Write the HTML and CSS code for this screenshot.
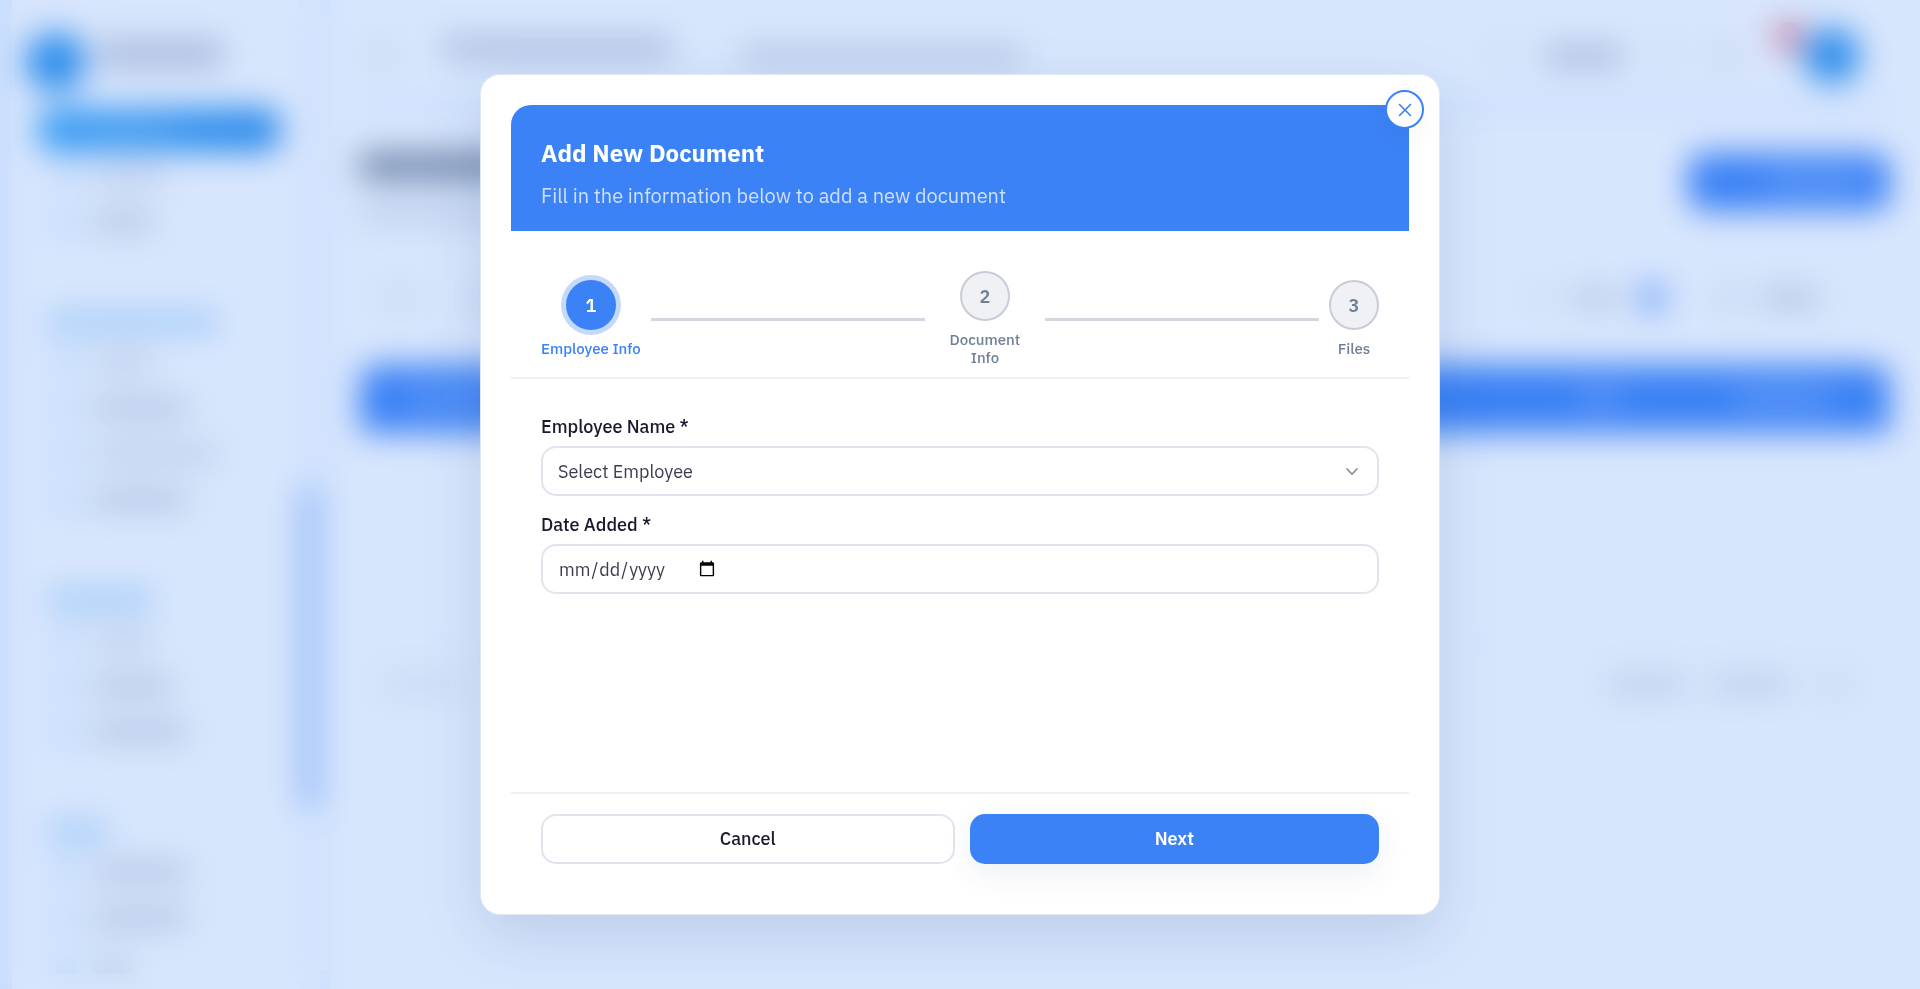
FILE: index.html
```html
<!DOCTYPE html>
<html lang="en">
<head>
    <meta charset="UTF-8">
    <meta name="viewport" content="width=device-width, initial-scale=1.0">
    <title>Documents</title>
    <link rel="stylesheet" href="styles.css">
</head>
<body>
    <!-- Page behind the modal -->
    <div class="app" aria-hidden="true">
        <aside class="sidebar">
            <div class="sidebar-content">
                <div class="brand"><i class="logo"></i><i class="bar bar-dark w-120"></i></div>
                <div class="nav-group">
                    <div class="nav-item active"><i class="icon"></i><i class="bar w-80"></i></div>
                    <div class="nav-item"><i class="icon"></i><i class="bar w-70"></i></div>
                    <div class="nav-item"><i class="icon"></i><i class="bar bar-mid w-60"></i></div>
                </div>
                <div class="nav-group">
                    <div class="nav-title"><i class="w-170"></i></div>
                    <div class="nav-item"><i class="icon"></i><i class="bar w-60"></i></div>
                    <div class="nav-item"><i class="icon"></i><i class="bar bar-mid w-100"></i></div>
                    <div class="nav-item"><i class="icon"></i><i class="bar w-120"></i></div>
                    <div class="nav-item"><i class="icon"></i><i class="bar bar-mid w-100"></i></div>
                </div>
                <div class="nav-group">
                    <div class="nav-title"><i class="w-100"></i></div>
                    <div class="nav-item"><i class="icon"></i><i class="bar w-60"></i></div>
                    <div class="nav-item"><i class="icon"></i><i class="bar bar-mid w-80"></i></div>
                    <div class="nav-item"><i class="icon"></i><i class="bar bar-mid w-100"></i></div>
                </div>
                <div class="nav-group">
                    <div class="nav-title"><i class="w-60"></i></div>
                    <div class="nav-item"><i class="icon"></i><i class="bar bar-mid w-100"></i></div>
                    <div class="nav-item"><i class="icon"></i><i class="bar bar-mid w-100"></i></div>
                    <div class="nav-item"><i class="icon"></i><i class="bar w-40"></i></div>
                </div>
            </div>
            <div class="scrollbar"><i class="thumb"></i></div>
        </aside>
        <main class="main">
            <div class="topbar">
                <i class="bar w-20"></i>
                <div class="topbar-text">
                    <i class="bar bar-dark w-230"></i>
                </div>
                <i class="bar bar-mid w-280"></i>
                <div class="topbar-right">
                    <i class="bar bar-light w-20"></i>
                    <i class="bar bar-dark w-80"></i>
                    <i class="bar bar-light w-20"></i>
                    <i class="bar w-20"></i>
                    <div class="avatar"><i class="badge"></i></div>
                </div>
            </div>
            <div class="page-head">
                <div class="page-title">
                    <i class="bar bar-title w-230"></i>
                    <i class="bar w-280"></i>
                </div>
                <div class="add-btn"><i class="bar bar-white w-100"></i></div>
            </div>
            <div class="card">
                <div class="filters">
                    <i class="bar bar-light w-40"></i>
                    <i class="bar w-40"></i>
                    <div class="filters-right">
                        <i class="bar bar-light w-20"></i>
                        <i class="bar bar-mid w-40"></i>
                        <i class="count"></i>
                        <i class="bar w-20"></i>
                        <i class="bar bar-mid w-60"></i>
                    </div>
                </div>
                <div class="table-head">
                    <i class="bar bar-white w-80"></i>
                    <i class="bar bar-white w-80"></i>
                    <i class="bar bar-white w-80"></i>
                    <i class="bar bar-white w-80"></i>
                    <div class="table-head-right">
                        <i class="bar bar-white w-40"></i>
                        <i class="bar bar-white w-100"></i>
                    </div>
                </div>
                <div class="table-body"></div>
                <div class="pagination">
                    <i class="bar bar-light w-80"></i>
                    <div class="pages">
                        <i class="bar w-80"></i>
                        <i class="bar w-80"></i>
                        <i class="bar bar-light w-40"></i>
                    </div>
                </div>
            </div>
        </main>
    </div>

    <div class="overlay">
        <div class="modal" role="dialog" aria-modal="true" aria-labelledby="modalTitle">
            <button type="button" class="close-btn" aria-label="Close">
                <svg width="14" height="14" viewBox="0 0 14 14" fill="none" stroke="currentColor" stroke-width="1.6" stroke-linecap="round">
                    <path d="M1.5 1.5l11 11M12.5 1.5l-11 11"/>
                </svg>
            </button>
            <div class="modal-header">
                <h2 id="modalTitle">Add New Document</h2>
                <p>Fill in the information below to add a new document</p>
            </div>
            <div class="steps">
                <div class="step active">
                    <div class="step-number">1</div>
                    <div class="step-label">Employee Info</div>
                </div>
                <div class="step-line"></div>
                <div class="step">
                    <div class="step-number">2</div>
                    <div class="step-label">Document Info</div>
                </div>
                <div class="step-line"></div>
                <div class="step">
                    <div class="step-number">3</div>
                    <div class="step-label">Files</div>
                </div>
            </div>
            <form class="modal-form">
                <div class="fields">
                    <div class="field">
                        <label for="employee">Employee Name *</label>
                        <div class="select-wrap">
                            <select id="employee">
                                <option>Select Employee</option>
                            </select>
                            <svg class="chevron" width="14" height="14" viewBox="0 0 14 14" fill="none" stroke="currentColor" stroke-width="1.6">
                                <path d="M1.5 4.5L7 10l5.500-5.500"/>
                            </svg>
                        </div>
                    </div>
                    <div class="field">
                        <label for="dateAdded">Date Added *</label>
                        <input type="date" id="dateAdded">
                    </div>
                </div>
                <div class="modal-footer">
                    <button type="button" class="btn btn-cancel">Cancel</button>
                    <button type="button" class="btn btn-next">Next</button>
                </div>
            </form>
        </div>
    </div>
</body>
</html>
```

FILE: styles.css
```css
* {
    box-sizing: border-box;
}
body {
    margin: 0;
    height: 100vh;
    overflow: hidden;
    font-family: "IBM Plex Sans", Roboto, "Open Sans", sans-serif;
    font-size: 18px;
    color: #1a1a2e;
    background-color: #fff;
}

/* Page behind */
.app {
    display: flex;
    height: 100vh;
    overflow: hidden;
    border-left: 12px solid #ebf4ff;
}
.bar {
    display: block;
    flex: none;
    height: 18px;
    border-radius: 4px;
    background-color: rgba(100, 110, 140, 0.22);
}
.bar-light { background-color: rgba(100, 110, 140, 0.12); }
.bar-mid { background-color: rgba(100, 110, 140, 0.3); }
.bar-dark { background-color: rgba(90, 100, 140, 0.4); }
.bar-title { height: 26px; background-color: rgba(60, 75, 100, 0.7); }
.bar-white { background-color: rgba(255, 255, 255, 0.25); }
.w-20 { width: 20px; }
.w-40 { width: 40px; }
.w-60 { width: 60px; }
.w-70 { width: 70px; }
.w-80 { width: 80px; }
.w-100 { width: 95px; }
.w-120 { width: 125px; }
.w-170 { width: 170px; }
.w-230 { width: 230px; }
.w-280 { width: 280px; }

.sidebar {
    display: flex;
    width: 318px;
    flex: none;
    border-right: 10px solid #eef7ff;
}
.sidebar-content {
    flex: 1;
    padding: 0 18px 0 26px;
}
.brand {
    display: flex;
    align-items: center;
    gap: 12px;
    height: 107px;
    margin-left: -12px;
}
.brand .bar {
    height: 24px;
}
.logo {
    width: 60px;
    height: 60px;
    border-radius: 50%;
    background-color: #2a90ea;
    margin-top: 16px;
}
.nav-group {
    margin-bottom: 60px;
}
.nav-title {
    display: flex;
    align-items: center;
    height: 34px;
    padding-left: 10px;
}
.nav-title i {
    height: 20px;
    background-color: #b9defa;
}
.nav-title .w-100 {
    width: 105px;
}
.nav-item {
    display: flex;
    align-items: center;
    gap: 17px;
    height: 46px;
    padding-left: 18px;
}
.nav-item .icon {
    width: 20px;
    height: 20px;
    background-color: #d0e8fe;
}
.nav-item.active {
    height: 44px;
    margin: 1px 0;
    border-radius: 14px;
    background: linear-gradient(90deg, #3ba5f6, #2a8de8);
}
.nav-item.active .icon {
    background-color: transparent;
}
.nav-item.active .bar {
    background-color: rgba(255, 255, 255, 0.15);
}
.scrollbar {
    width: 22px;
    padding-top: 485px;
    background-color: #fafcff;
}
.thumb {
    display: block;
    height: 325px;
    border-radius: 11px;
    background-color: #b2cefb;
}

.main {
    flex: 1;
    padding: 0 30px;
}
.topbar {
    display: flex;
    align-items: center;
    height: 110px;
    padding: 12px 0 0 12px;
    border-bottom: 10px solid #e8f4ff;
}
.topbar-text {
    margin: 0 70px 16px 50px;
}
.topbar-right {
    display: flex;
    align-items: center;
    gap: 36px;
    margin-left: auto;
    padding-right: 30px;
}
.avatar {
    position: relative;
    width: 56px;
    height: 56px;
    border-radius: 50%;
    background-color: #2a90ea;
    margin-left: 32px;
}
.badge {
    position: absolute;
    top: -6px;
    left: -30px;
    width: 30px;
    height: 30px;
    border-radius: 50%;
    background-color: #e87a88;
}
.page-head {
    display: flex;
    justify-content: space-between;
    padding-top: 43px;
    height: 145px;
}
.page-title {
    display: flex;
    flex-direction: column;
    gap: 25px;
}
.add-btn {
    display: flex;
    align-items: center;
    justify-content: center;
    width: 202px;
    height: 58px;
    padding-left: 50px;
    border-radius: 16px;
    background-color: #3b82f6;
}
.filters {
    display: flex;
    align-items: center;
    gap: 60px;
    height: 110px;
    padding: 0 70px 24px 20px;
}
.filters-right {
    display: flex;
    align-items: center;
    gap: 22px;
    margin-left: auto;
}
.count {
    width: 32px;
    height: 32px;
    border-radius: 50%;
    margin-right: 28px;
    background-color: #8db5fa;
}
.table-head {
    display: flex;
    align-items: center;
    justify-content: space-between;
    height: 68px;
    padding: 0 60px 0 50px;
    border-radius: 16px 16px 0 0;
    background-color: #3b82f6;
}
.table-head-right {
    display: flex;
    gap: 115px;
}
.table-body {
    height: 210px;
    border-bottom: 2px solid #f1f5f9;
}
.pagination {
    display: flex;
    align-items: center;
    justify-content: space-between;
    height: 84px;
    padding: 0 35px 0 20px;
}
.pages {
    display: flex;
    gap: 24px;
}

/* Modal */
.overlay {
    position: fixed;
    inset: 0;
    display: flex;
    align-items: center;
    justify-content: center;
    background-color: rgba(59, 130, 246, 0.2);
    backdrop-filter: blur(16px);
}
.modal {
    position: relative;
    display: flex;
    flex-direction: column;
    width: 90%;
    max-width: 960px;
    height: 85vh;
    padding: 30px;
    background-color: #fff;
    border: 1px solid #e2e8f0;
    border-radius: 20px;
    box-shadow: 0 20px 60px rgba(30, 60, 130, 0.15);
}
.close-btn {
    position: absolute;
    top: 15px;
    right: 15px;
    display: flex;
    align-items: center;
    justify-content: center;
    width: 39px;
    height: 39px;
    padding: 0;
    color: #3b82f6;
    background-color: #fff;
    border: 2px solid #3b82f6;
    border-radius: 50%;
    box-shadow: 0 10px 30px rgba(0, 0, 0, 0.04);
}
.modal-header {
    padding: 30px 30px 20px;
    color: #fff;
    background-color: #3b82f6;
    border-radius: 20px 0 0 0;
}
.modal-header h2 {
    margin: 0 0 10px;
    font-size: 24px;
    font-weight: 700;
    line-height: 36px;
}
.modal-header p {
    margin: 0;
    font-size: 20px;
    line-height: 30px;
    color: #cee0fd;
}
.steps {
    display: flex;
    align-items: center;
    padding: 40px 30px 10px;
    border-bottom: 2px solid #edf0f5;
}
.step {
    display: flex;
    flex-direction: column;
    align-items: center;
    gap: 10px;
    max-width: 100px;
    color: #718096;
}
.step-number {
    display: flex;
    align-items: center;
    justify-content: center;
    width: 50px;
    height: 50px;
    border: 2px solid #cbcbd8;
    border-radius: 50%;
    background-color: #f0f1f5;
    font-size: 18px;
    font-weight: 600;
}
.step-label {
    font-size: 15px;
    font-weight: 500;
    line-height: 18px;
    text-align: center;
}
.step.active {
    color: #3b82f6;
}
.step.active .step-number {
    color: #fff;
    background-color: #3b82f6;
    border-color: #3b82f6;
    box-shadow: 0 0 0 5px #c4d9fc;
}
.step-line {
    flex: 1;
    height: 3px;
    margin: 0 10px;
    background-color: #d4d5df;
}
.modal-form {
    flex: 1;
    display: flex;
    flex-direction: column;
}
.fields {
    flex: 1;
    padding: 36px 30px 0;
}
.field {
    margin-bottom: 17px;
}
.field label {
    display: block;
    margin-bottom: 7px;
    font-weight: 500;
    line-height: 24px;
}
.select-wrap {
    position: relative;
}
.field select,
.field input {
    display: flex;
    width: 100%;
    height: 50px;
    padding: 0 15px;
    font: inherit;
    color: #3c3c4e;
    background-color: #fff;
    border: 2px solid #e0e4ed;
    border-radius: 15px;
    appearance: none;
}
.chevron {
    position: absolute;
    top: 18px;
    right: 20px;
    color: #8a8a99;
    pointer-events: none;
}
.field input::-webkit-datetime-edit {
    flex: none;
}
.field input::-webkit-calendar-picker-indicator {
    margin-left: 0;
}
.modal-footer {
    display: flex;
    gap: 15px;
    padding: 20px 30px;
    border-top: 2px solid #edf0f5;
}
.btn {
    flex: 1;
    height: 50px;
    font: inherit;
    font-weight: 600;
    border-radius: 15px;
}
.btn-cancel {
    color: #1a1a2e;
    background-color: #fff;
    border: 2px solid #e0e4ed;
    font-weight: 500;
}
.btn-next {
    color: #fff;
    background-color: #3b82f6;
    border: none;
    box-shadow: 0 10px 30px rgba(30, 60, 130, 0.08);
}
```
